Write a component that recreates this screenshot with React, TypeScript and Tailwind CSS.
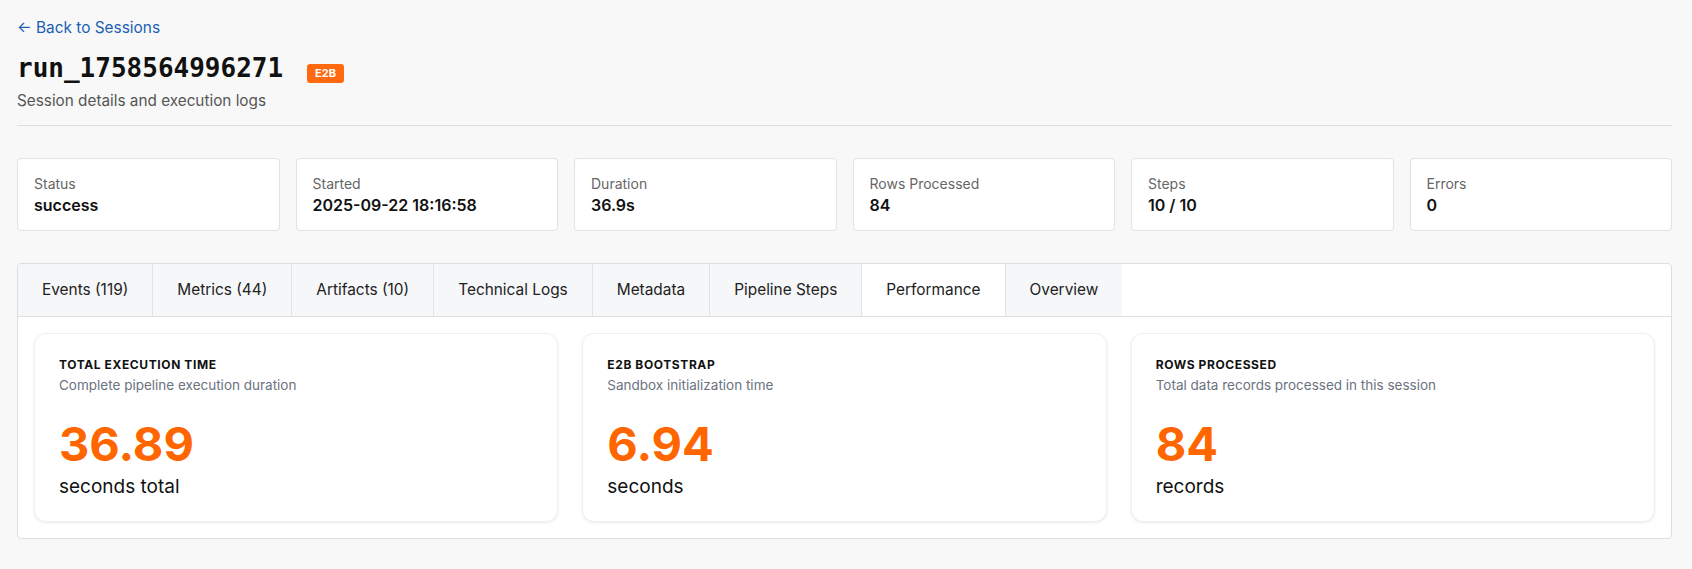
const stats = [
  { label: 'Status', value: 'success' },
  { label: 'Started', value: '2025-09-22 18:16:58' },
  { label: 'Duration', value: '36.9s' },
  { label: 'Rows Processed', value: '84' },
  { label: 'Steps', value: '10 / 10' },
  { label: 'Errors', value: '0' },
]

const tabs = [
  'Events (119)',
  'Metrics (44)',
  'Artifacts (10)',
  'Technical Logs',
  'Metadata',
  'Pipeline Steps',
  'Performance',
  'Overview',
]

const perf = [
  {
    title: 'Total Execution Time',
    desc: 'Complete pipeline execution duration',
    value: '36.89',
    unit: 'seconds total',
  },
  {
    title: 'E2B Bootstrap',
    desc: 'Sandbox initialization time',
    value: '6.94',
    unit: 'seconds',
  },
  {
    title: 'Rows Processed',
    desc: 'Total data records processed in this session',
    value: '84',
    unit: 'records',
  },
]

export default function App() {
  const active = 'Performance'

  return (
    <div className="min-h-screen bg-[#f8f8f8] pl-[17px] pr-[20px] pt-[18px] font-['Inter',sans-serif] text-[#111]">
      {/* Back link */}
      <a href="#" className="block text-[15.4px] leading-5 text-[#1a5fb4]">
        ← Back to Sessions
      </a>

      {/* Header */}
      <div className="mt-[14px] border-b border-[#dedede] pb-[14px]">
        <div className="flex items-baseline">
          <h1 className="font-['DejaVu_Sans_Mono',monospace] text-[26px] font-bold leading-8 text-[#111]">
            run_1758564996271
          </h1>
          <span className="ml-6 rounded-[3px] bg-[#ff6a10] px-2 py-[3px] text-[11px] font-bold leading-[13px] text-white">
            E2B
          </span>
        </div>
        <p className="mt-[7px] text-[15.3px] leading-5 text-[#555]">Session details and execution logs</p>
      </div>

      {/* Stat cards */}
      <div className="mt-8 grid grid-cols-6 gap-4">
        {stats.map(s => (
          <div key={s.label} className="rounded-[4px] border border-[#e2e2e2] bg-white px-4 pt-4 pb-[15px]">
            <div className="text-sm leading-[18px] text-[#666]">{s.label}</div>
            <div className="mt-0.5 text-base font-semibold leading-5 text-[#111]">{s.value}</div>
          </div>
        ))}
      </div>

      {/* Tab panel */}
      <div className="mt-8 overflow-hidden rounded-[4px] border border-[#dedede] bg-white">
        <div className="flex border-b border-[#e0e0e0]">
          {tabs.map(t => (
            <button
              key={t}
              className={`flex h-[52px] items-center border-r border-[#e3e3e3] px-6 text-[15.4px] text-[#222] last:border-r-0 ${
                t === active ? 'bg-white' : 'bg-[#f6f7f9]'
              }`}
            >
              {t}
            </button>
          ))}
        </div>

        <div className="grid grid-cols-3 gap-6 p-4">
          {perf.map(p => (
            <div
              key={p.title}
              className="rounded-xl border border-[#efefef] bg-white px-6 pt-[23px] pb-5 shadow-[0_1px_3px_rgba(0,0,0,0.08)]"
            >
              <div className="text-xs font-bold uppercase leading-4 tracking-wider text-[#111]">{p.title}</div>
              <div className="mt-0.5 text-[13.5px] leading-5 text-[#6b7280]">{p.desc}</div>
              <div className="mt-[25px] text-[47px] font-bold leading-[48px] text-[#ff6600]">{p.value}</div>
              <div className="mt-[5px] text-[19px] leading-7 text-[#111]">{p.unit}</div>
            </div>
          ))}
        </div>
      </div>
    </div>
  )
}
